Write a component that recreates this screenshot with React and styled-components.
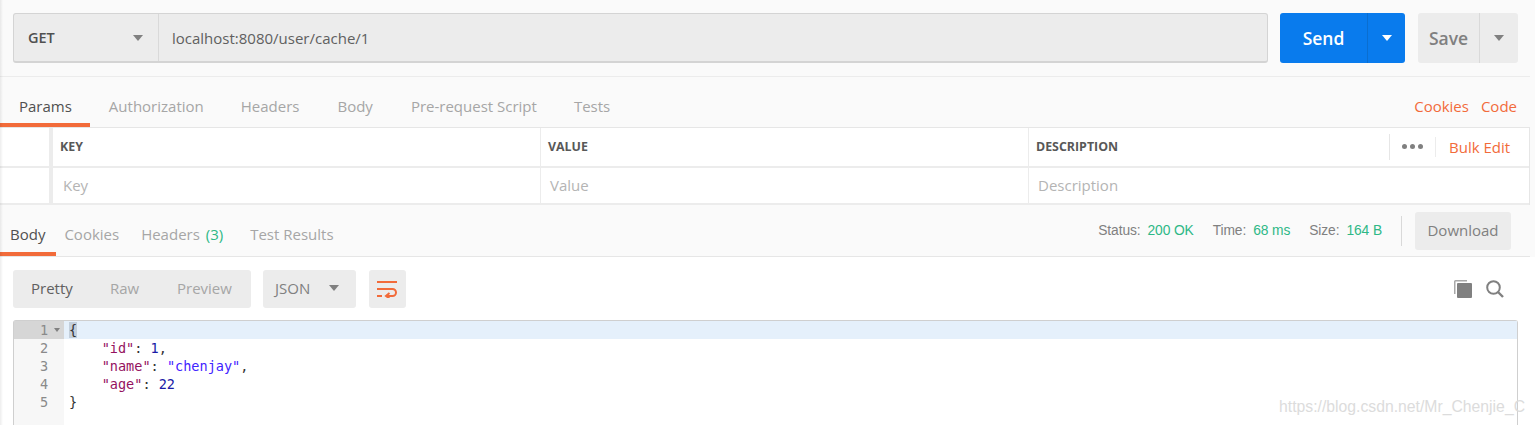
import React from "react";
import styled, { createGlobalStyle } from "styled-components";

const ORANGE = "#f26b3a";
const GREEN = "#2eb886";

const GlobalStyle = createGlobalStyle`
  html, body {
    margin: 0;
    padding: 0;
    height: 425px;
    overflow: hidden;
    background: #fafafa;
  }
  body {
    font-family: "Open Sans", "Noto Sans", sans-serif;
    color: #505050;
  }
`;

const Page = styled.div`
  position: relative;
  width: 1535px;
  height: 425px;
  overflow: hidden;
  &::before {
    content: "";
    position: absolute;
    left: 0;
    top: 0;
    bottom: 0;
    width: 3px;
    background: linear-gradient(to right, rgba(0, 0, 0, 0.07), rgba(0, 0, 0, 0));
  }
`;

const Inner = styled.div`
  width: 1530px;
`;

const RequestBar = styled.div`
  display: flex;
  height: 77px;
  box-sizing: border-box;
  padding: 13px 12px 0 13px;
  border-bottom: 1px solid #ececec;
`;

const UrlGroup = styled.div`
  display: flex;
  width: 1255px;
  height: 50px;
  box-sizing: border-box;
  background: #ececec;
  border: 1px solid #d4d4d4;
  border-bottom-width: 2px;
  border-radius: 3px;
`;

const MethodSelect = styled.div`
  display: flex;
  align-items: center;
  justify-content: space-between;
  width: 145px;
  box-sizing: border-box;
  padding: 0 15px 0 14px;
  border-right: 1px solid #d9d9d9;
  font-size: 14.5px;
  font-weight: 600;
  color: #505050;
`;

const UrlText = styled.div`
  display: flex;
  align-items: center;
  padding-left: 13px;
  font-size: 15px;
  color: #606060;
`;

const Caret = styled.span`
  display: block;
  width: 0;
  height: 0;
  border-left: ${(p) => p.$size || 5}px solid transparent;
  border-right: ${(p) => p.$size || 5}px solid transparent;
  border-top: ${(p) => (p.$size || 5) + 1}px solid ${(p) => p.$color || "#808080"};
`;

const SplitButton = styled.div`
  display: flex;
  width: ${(p) => p.$width}px;
  height: 50px;
  margin-left: ${(p) => p.$gap}px;
  border-radius: 3px;
  background: ${(p) => p.$bg};
  color: ${(p) => p.$color};
  font-size: 17.5px;
  font-weight: 600;
`;

const SplitLabel = styled.div`
  flex: 1;
  display: flex;
  align-items: center;
  justify-content: center;
`;

const SplitCaret = styled.div`
  display: flex;
  align-items: center;
  justify-content: center;
  width: ${(p) => p.$width}px;
  border-left: 1px solid ${(p) => p.$line};
  box-sizing: border-box;
`;

const TabRow = styled.div`
  display: flex;
  align-items: stretch;
  height: ${(p) => p.$height}px;
  box-sizing: border-box;
  border-bottom: 1px solid #e6e6e6;
`;

const Tab = styled.div`
  display: flex;
  align-items: center;
  box-sizing: border-box;
  height: 100%;
  padding: ${(p) => p.$top ?? 12}px ${(p) => p.$right}px 0 ${(p) => p.$left}px;
  font-size: 15px;
  color: ${(p) => (p.$active ? "#505050" : "#a6a6a6")};
  border-bottom: 4px solid ${(p) => (p.$active ? ORANGE : "transparent")};
  white-space: pre;
`;

const TabLinks = styled.div`
  display: flex;
  align-items: center;
  gap: 12px;
  margin-left: auto;
  padding: 8px 13px 0 0;
  font-size: 15px;
  color: ${ORANGE};
`;

const GreenText = styled.span`
  color: ${GREEN};
  margin-left: ${(p) => p.$gap || 0}px;
`;

const ParamTable = styled.div`
  background: #fff;
  border-right: 1px solid #e6e6e6;
`;

const ParamRow = styled.div`
  display: grid;
  grid-template-columns: 53px 487px 488px 1fr;
  height: ${(p) => p.$height}px;
  box-sizing: border-box;
  border-bottom: 2px solid #ececec;
`;

const Handle = styled.div`
  border-right: 4px solid #ececec;
`;

const Cell = styled.div`
  display: flex;
  align-items: center;
  box-sizing: border-box;
  padding: 0 0 2px ${(p) => p.$pad || 9}px;
  border-left: ${(p) => (p.$first ? "0" : "1px solid #ececec")};
  font-size: 15px;
  color: #b4b4b4;
`;

const HeadCell = styled(Cell)`
  font-size: 12.4px;
  font-weight: 700;
  color: #585858;
  padding: 0 0 1px 7px;
`;

const RowTools = styled.div`
  display: flex;
  align-items: center;
  margin-left: auto;
  height: 100%;
`;

const MoreDots = styled.div`
  display: flex;
  align-items: center;
  justify-content: center;
  gap: 3px;
  width: 46px;
  height: 26px;
  border-left: 1px solid #e6e6e6;
  box-sizing: border-box;
`;

const Dot = styled.i`
  display: block;
  width: 5px;
  height: 5px;
  border-radius: 50%;
  background: #808080;
`;

const BulkEdit = styled.div`
  width: 94px;
  box-sizing: border-box;
  padding-left: 13px;
  border-left: 1px solid #ececec;
  line-height: 20px;
  font-size: 15px;
  font-weight: 400;
  color: ${ORANGE};
`;

const StatusArea = styled.div`
  display: flex;
  align-items: center;
  margin-left: auto;
  padding-right: 19px;
  font-family: "Liberation Sans", Arial, sans-serif;
  font-size: 13.8px;
  letter-spacing: -0.1px;
  color: #808080;
`;

const StatusItem = styled.div`
  display: flex;
  gap: 7px;
  margin-left: 19px;
`;

const Divider = styled.div`
  width: 1px;
  height: 30px;
  margin: 0 13px 0 19px;
  background: #d9d9d9;
`;

const GrayButton = styled.div`
  display: flex;
  align-items: center;
  justify-content: center;
  box-sizing: border-box;
  height: ${(p) => p.$height}px;
  width: ${(p) => p.$width}px;
  padding-bottom: ${(p) => (p.$plain ? 0 : 2)}px;
  background: #ececec;
  border-radius: 3px;
  font-family: "Open Sans", sans-serif;
  font-size: 15px;
  letter-spacing: 0;
  color: #808080;
`;

const BodyPanel = styled.div`
  background: #fff;
  width: 1535px;
  height: 168px;
`;

const Toolbar = styled.div`
  display: flex;
  align-items: center;
  height: 63px;
  box-sizing: border-box;
  padding: 0 31px 0 13px;
`;

const ViewGroup = styled(GrayButton)`
  justify-content: flex-start;
  padding-left: 18px;
  margin-right: 12px;
`;

const ViewOption = styled.span`
  width: ${(p) => p.$width}px;
  color: ${(p) => (p.$active ? "#606060" : "#a6a6a6")};
`;

const FormatSelect = styled(GrayButton)`
  justify-content: space-between;
  padding: 0 17px 2px 12px;
  margin-right: 13px;
`;

const ToolIcons = styled.div`
  display: flex;
  align-items: center;
  gap: 14px;
  margin-left: auto;
`;

const Editor = styled.div`
  display: flex;
  width: 1505px;
  height: 105px;
  box-sizing: border-box;
  margin-left: 13px;
  border: 1px solid #cfcfcf;
  border-bottom: 0;
  border-radius: 3px 3px 0 0;
  font-family: "DejaVu Sans Mono", monospace;
  font-size: 13.55px;
  line-height: 18px;
`;

const Gutter = styled.div`
  width: 50px;
  flex: none;
  background: #f7f7f7;
  color: #8a8a8a;
`;

const GutterLine = styled.div`
  display: flex;
  align-items: center;
  height: 18px;
  padding-left: 26px;
  gap: 6px;
  background: ${(p) => (p.$active ? "#d6d6d6" : "transparent")};
`;

const Code = styled.div`
  flex: 1;
  min-width: 0;
`;

const CodeLine = styled.div`
  height: 18px;
  padding-left: 5px;
  white-space: pre;
  color: #333;
  background: ${(p) => (p.$active ? "#e5f0fb" : "transparent")};
`;

const Cursor = styled.span`
  background: #c3cfdc;
`;

const JsonKey = styled.span`
  color: #95125f;
`;
const JsonNum = styled.span`
  color: #1a1aa6;
`;
const JsonStr = styled.span`
  color: #3f23ff;
`;

const Watermark = styled.div`
  position: absolute;
  left: 1279px;
  top: 398px;
  font-family: "Liberation Sans", Arial, sans-serif;
  font-size: 15.75px;
  color: #dcdcdc;
  white-space: nowrap;
`;

const WrapIcon = () => (
  <svg width="21" height="18" viewBox="0 0 21 18" fill="none" stroke={ORANGE} strokeWidth="2">
    <path d="M0 2h20" />
    <path d="M0 9h15.5a3.5 3.5 0 0 1 0 7H10" />
    <path d="M0 16h5" />
    <path d="M12.5 13l-3.5 3 3.5 2.500" />
  </svg>
);

const CopyIcon = () => (
  <svg width="18" height="18" viewBox="0 0 18 18">
    <path d="M0 1.500A1.500 1.500 0 0 1 1.500 0H13v1.500H1.500V14H0z" fill="#a8a8a8" />
    <rect x="3" y="3" width="15" height="15" rx="1" fill="#808080" />
  </svg>
);

const SearchIcon = () => (
  <svg width="18" height="18" viewBox="0 0 18 18" fill="none" stroke="#808080" strokeWidth="2">
    <circle cx="7.500" cy="7.500" r="6.300" />
    <path d="M12 12l5 5" strokeWidth="2.400" />
  </svg>
);

const App = () => (
  <Page>
    <GlobalStyle />
    <Inner>
      <RequestBar>
        <UrlGroup>
          <MethodSelect>
            GET
            <Caret />
          </MethodSelect>
          <UrlText>localhost:8080/user/cache/1</UrlText>
        </UrlGroup>
        <SplitButton $width={125} $gap={12} $bg="#097bed" $color="#fff">
          <SplitLabel>Send</SplitLabel>
          <SplitCaret $width={38} $line="#0a6ed0">
            <Caret $color="#fff" />
          </SplitCaret>
        </SplitButton>
        <SplitButton $width={100} $gap={13} $bg="#ececec" $color="#808080">
          <SplitLabel>Save</SplitLabel>
          <SplitCaret $width={39} $line="#d9d9d9">
            <Caret />
          </SplitCaret>
        </SplitButton>
      </RequestBar>

      <TabRow $height={51}>
        <Tab $active $left={19} $right={18}>Params</Tab>
        <Tab $left={19} $right={18}>Authorization</Tab>
        <Tab $left={19} $right={19}>Headers</Tab>
        <Tab $left={19} $right={19}>Body</Tab>
        <Tab $left={19} $right={18}>Pre-request Script</Tab>
        <Tab $left={19} $right={18}>Tests</Tab>
        <TabLinks>
          <span>Cookies</span>
          <span>Code</span>
        </TabLinks>
      </TabRow>

      <ParamTable>
        <ParamRow $height={40}>
          <Handle />
          <HeadCell $first>KEY</HeadCell>
          <HeadCell>VALUE</HeadCell>
          <HeadCell>
            DESCRIPTION
            <RowTools>
              <MoreDots>
                <Dot />
                <Dot />
                <Dot />
              </MoreDots>
              <BulkEdit>Bulk Edit</BulkEdit>
            </RowTools>
          </HeadCell>
        </ParamRow>
        <ParamRow $height={37}>
          <Handle />
          <Cell $first $pad={10}>Key</Cell>
          <Cell>Value</Cell>
          <Cell>Description</Cell>
        </ParamRow>
      </ParamTable>

      <TabRow $height={52}>
        <Tab $active $top={10} $left={10} $right={11}>Body</Tab>
        <Tab $top={10} $left={8} $right={11}>Cookies</Tab>
        <Tab $top={10} $left={11} $right={13}>
          Headers <GreenText $gap={2}>(3)</GreenText>
        </Tab>
        <Tab $top={10} $left={14} $right={13}>Test Results</Tab>
        <StatusArea>
          <StatusItem>
            Status: <GreenText>200 OK</GreenText>
          </StatusItem>
          <StatusItem>
            Time: <GreenText>68 ms</GreenText>
          </StatusItem>
          <StatusItem>
            Size: <GreenText>164 B</GreenText>
          </StatusItem>
          <Divider />
          <GrayButton $width={96} $height={38}>Download</GrayButton>
        </StatusArea>
      </TabRow>
    </Inner>

    <BodyPanel>
      <Toolbar>
        <ViewGroup $width={238} $height={38}>
          <ViewOption $active $width={79}>Pretty</ViewOption>
          <ViewOption $width={67}>Raw</ViewOption>
          <ViewOption $width={60}>Preview</ViewOption>
        </ViewGroup>
        <FormatSelect $width={93} $height={38}>
          JSON
          <Caret />
        </FormatSelect>
        <GrayButton $plain $width={37} $height={38}>
          <WrapIcon />
        </GrayButton>
        <ToolIcons>
          <CopyIcon />
          <SearchIcon />
        </ToolIcons>
      </Toolbar>
      <Editor>
        <Gutter>
          <GutterLine $active>
            1
            <Caret $size={3} $color="#808080" />
          </GutterLine>
          <GutterLine>2</GutterLine>
          <GutterLine>3</GutterLine>
          <GutterLine>4</GutterLine>
          <GutterLine>5</GutterLine>
        </Gutter>
        <Code>
          <CodeLine $active><Cursor>{"{"}</Cursor></CodeLine>
          <CodeLine>
            {"    "}<JsonKey>"id"</JsonKey>: <JsonNum>1</JsonNum>,
          </CodeLine>
          <CodeLine>
            {"    "}<JsonKey>"name"</JsonKey>: <JsonStr>"chenjay"</JsonStr>,
          </CodeLine>
          <CodeLine>
            {"    "}<JsonKey>"age"</JsonKey>: <JsonNum>22</JsonNum>
          </CodeLine>
          <CodeLine>{"}"}</CodeLine>
        </Code>
      </Editor>
    </BodyPanel>
    <Watermark>https://blog.csdn.net/Mr_Chenjie_C</Watermark>
  </Page>
);

export default App;
